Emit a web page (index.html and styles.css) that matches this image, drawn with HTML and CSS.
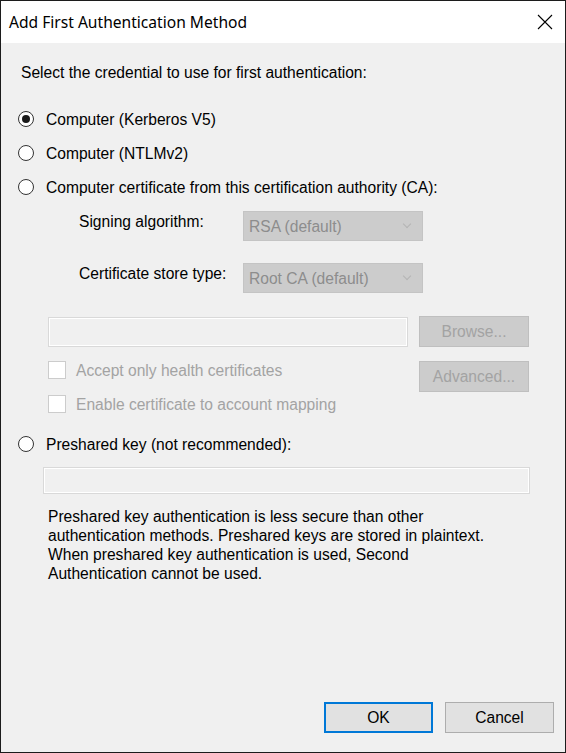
FILE: index.html
```html
<!DOCTYPE html>
<html lang="en">
  <head>
    <meta charset="UTF-8" />
    <title>Add First Authentication Method</title>
    <link rel="stylesheet" href="styles.css">
  </head>
  <body>
    <div class="window">
      <div class="titlebar">
        <span class="title">Add First Authentication Method</span>
        <svg class="close" width="16" height="16" viewBox="0 0 16 16" aria-hidden="true">
          <path d="M1 1 L15 15 M15 1 L1 15" stroke="#000" stroke-width="1.1" fill="none" />
        </svg>
      </div>
      <div class="content">
        <p class="prompt">Select the credential to use for first authentication:</p>

        <label class="radio-row">
          <span class="radio checked"></span>
          <span>Computer (Kerberos V5)</span>
        </label>
        <label class="radio-row">
          <span class="radio"></span>
          <span>Computer (NTLMv2)</span>
        </label>
        <label class="radio-row">
          <span class="radio"></span>
          <span>Computer certificate from this certification authority (CA):</span>
        </label>

        <div class="field-row first">
          <span class="field-label">Signing algorithm:</span>
          <div class="combo"><span>RSA (default)</span><span class="chevron"></span></div>
        </div>
        <div class="field-row">
          <span class="field-label">Certificate store type:</span>
          <div class="combo"><span>Root CA (default)</span><span class="chevron"></span></div>
        </div>

        <div class="ca-row">
          <div class="textbox ca-box"></div>
          <div class="btn disabled">Browse...</div>
        </div>

        <div class="check-section">
          <div class="checks">
            <div class="check-row">
              <span class="checkbox"></span>
              <span>Accept only health certificates</span>
            </div>
            <div class="check-row">
              <span class="checkbox"></span>
              <span>Enable certificate to account mapping</span>
            </div>
          </div>
          <div class="btn disabled">Advanced...</div>
        </div>

        <label class="radio-row psk">
          <span class="radio"></span>
          <span>Preshared key (not recommended):</span>
        </label>
        <div class="textbox psk-box"></div>

        <p class="note">Preshared key authentication is less secure than other<br>authentication methods. Preshared keys are stored in plaintext.<br>When preshared key authentication is used, Second<br>Authentication cannot be used.</p>

        <div class="actions">
          <div class="btn default">OK</div>
          <div class="btn">Cancel</div>
        </div>
      </div>
    </div>
  </body>
</html>
```

FILE: styles.css
```css
body {
  margin: 0;
  font-family: 'Liberation Sans', Arial, sans-serif;
  font-size: 15.6px;
  color: #000;
}
.window {
  width: 566px;
  height: 753px;
  box-sizing: border-box;
  border: 1px solid #1c1c1c;
  background: #f0f0f0;
  display: flex;
  flex-direction: column;
}
.titlebar {
  height: 42px;
  background: #fff;
  display: flex;
  align-items: center;
  justify-content: space-between;
  padding: 0 12px 0 8px;
  flex-shrink: 0;
}
.title {
  font-family: 'Noto Sans', sans-serif;
  font-size: 15.6px;
  color: #000;
}
.content {
  flex: 1;
  display: flex;
  flex-direction: column;
  padding: 20px 11px 19px 17px;
  line-height: 19px;
}
.prompt {
  margin: 0 0 20px 3px;
}
.radio-row {
  height: 34px;
  display: flex;
  align-items: center;
  gap: 12px;
}
.radio {
  width: 14px;
  height: 14px;
  border: 1px solid #333;
  border-radius: 50%;
  background: #fff;
  position: relative;
}
.radio.checked::after {
  content: '';
  position: absolute;
  left: 3px;
  top: 3px;
  width: 8px;
  height: 8px;
  border-radius: 50%;
  background: #1a1a1a;
}
.field-row {
  display: flex;
  align-items: flex-start;
  margin: 22px 0 0 61px;
}
.field-row.first {
  margin-top: 7px;
}
.field-label {
  width: 164px;
  padding-top: 1px;
}
.combo {
  width: 180px;
  height: 30px;
  box-sizing: border-box;
  background: #cccccc;
  border: 1px solid #c4c4c4;
  color: #8d8d8d;
  display: flex;
  align-items: center;
  justify-content: space-between;
  padding: 0 12px 0 5px;
}
.chevron {
  width: 5px;
  height: 5px;
  border-right: 1px solid #b4b4b4;
  border-bottom: 1px solid #b4b4b4;
  transform: rotate(45deg);
  margin-top: -4px;
}
.ca-row {
  display: flex;
  align-items: center;
  gap: 11px;
  margin: 23px 0 0 30px;
}
.textbox {
  box-sizing: border-box;
  border: 1px solid #d9d9d9;
  box-shadow: inset 0 0 0 1px #fff;
  background: #f0f0f0;
}
.ca-box {
  width: 360px;
  height: 30px;
}
.btn {
  width: 110px;
  height: 31px;
  box-sizing: border-box;
  border: 1px solid #adadad;
  background: #e1e1e1;
  display: flex;
  align-items: center;
  justify-content: center;
}
.btn.disabled {
  background: #cccccc;
  border-color: #bfbfbf;
  color: #a3a3a3;
}
.btn.default {
  border: 2px solid #0078d7;
}
.check-section {
  display: flex;
  align-items: flex-start;
  gap: 11px;
  margin: 14px 0 0 30px;
}
.checks {
  width: 360px;
  display: flex;
  flex-direction: column;
  gap: 16px;
}
.check-row {
  height: 18px;
  display: flex;
  align-items: center;
  gap: 10px;
  color: #a3a3a3;
}
.checkbox {
  width: 16px;
  height: 16px;
  border: 1px solid #cccccc;
  background: #fff;
}
.psk {
  margin-top: 14px;
}
.psk-box {
  width: 487px;
  height: 27px;
  margin: 6px 0 0 25px;
}
.note {
  margin: 13px 0 0 30px;
}
.actions {
  margin-top: auto;
  display: flex;
  justify-content: flex-end;
  gap: 12px;
}
.actions .btn {
  width: 109px;
}
```
